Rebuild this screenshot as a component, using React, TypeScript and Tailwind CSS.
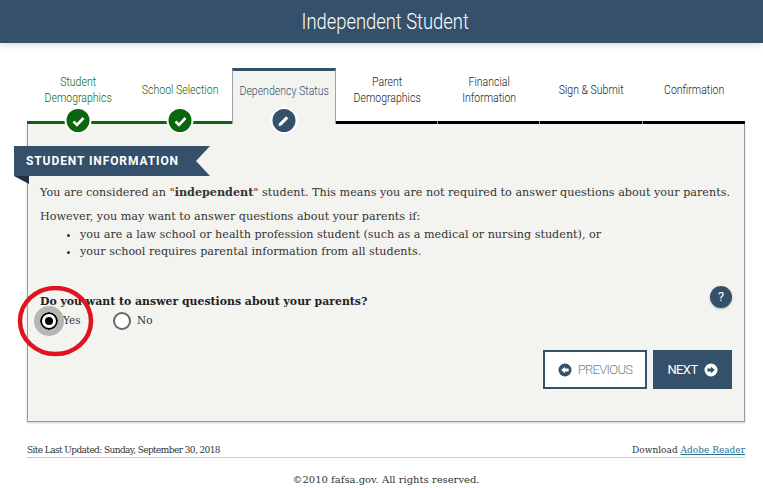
const serif = "font-['DejaVu_Serif','Liberation_Serif',serif]";

const steps = [
  { label: ["Student", "Demographics"], state: "done" },
  { label: ["School Selection"], state: "done" },
  { label: ["Dependency Status"], state: "current" },
  { label: ["Parent", "Demographics"], state: "todo", tick: true },
  { label: ["Financial", "Information"], state: "todo", tick: true },
  { label: ["Sign & Submit"], state: "todo", tick: true },
  { label: ["Confirmation"], state: "todo" },
];

function Check() {
  return (
    <svg width="14" height="14" viewBox="0 0 14 14">
      <path d="M2 7.5 L5.5 11 L12 4" fill="none" stroke="#fff" strokeWidth="2.6" />
    </svg>
  );
}

function Pencil() {
  return (
    <svg width="14" height="14" viewBox="0 0 14 14">
      <path d="M2 12 L2.6 9.2 L9.6 2.2 L11.8 4.4 L4.8 11.4 Z" fill="#fff" />
    </svg>
  );
}

function Arrow({ dir, fg, bg }: { dir: "left" | "right"; fg: string; bg: string }) {
  return (
    <svg width="14" height="14" viewBox="0 0 14 14">
      <circle cx="7" cy="7" r="6.5" fill={bg} />
      {dir === "left" ? (
        <path d="M3.2 7 L7 3.8 V5.6 H10.6 V8.4 H7 V10.2 Z" fill={fg} />
      ) : (
        <path d="M10.8 7 L7 3.8 V5.6 H3.4 V8.4 H7 V10.2 Z" fill={fg} />
      )}
    </svg>
  );
}

function Step({ label, state, tick }: { label: string[]; state: string; tick?: boolean }) {
  const current = state === "current";
  const done = state === "done";
  return (
    <div
      className={`relative flex-1 min-w-0 h-[56px] ${current ? "bg-[#f3f3f0] border-t-[3px] border-x border-[#34506a] border-x-[#9aa5ae]" : "border-b-[3px] " + (done ? "border-[#0b660f]" : "border-black")}`}
    >
      <div
        className={`flex flex-col items-center justify-center text-[13px] leading-[16px] font-['Roboto',sans-serif] font-light whitespace-nowrap scale-x-[0.81] ${current ? "h-[39px] text-[#34506a]" : "h-[44px] " + (done ? "text-[#0b660f]" : "text-[#222]")}`}
      >
        {label.map((l) => (
          <span key={l}>{l}</span>
        ))}
      </div>
      {state !== "todo" && (
        <div
          className={`absolute left-1/2 -translate-x-1/2 w-[27px] h-[27px] rounded-full border-2 border-white flex items-center justify-center ${current ? "top-[36px]" : "top-[39px]"} ${done ? "bg-[#0b660f]" : "bg-[#34506a]"}`}
        >
          {done ? <Check /> : <Pencil />}
        </div>
      )}
      {tick && <span className="absolute right-0 -bottom-[3px] w-px h-[3px] bg-[#999]" />}
    </div>
  );
}

export default function App() {
  return (
    <div className="w-[763px] h-[488px] bg-white overflow-hidden relative">
      <header className="h-[43px] bg-[#34506a] shadow-[0_2px_6px_rgba(0,0,0,0.15)] flex items-center justify-center pl-[7px] text-white text-[22px] font-['Roboto',sans-serif] font-light">
        <span className="inline-block scale-x-[0.835] whitespace-nowrap">Independent Student</span>
      </header>

      <div className="mx-[27px] mt-[25px] w-[718px]">
        <div className="flex relative z-10">
          {steps.map((s) => (
            <Step key={s.label[0]} label={s.label} state={s.state} tick={s.tick} />
          ))}
        </div>

        <main className="h-[298px] bg-[#f3f3f0] border-x border-b border-[#9a9a9a] shadow-[0_1px_2px_rgba(0,0,0,0.2)] relative pt-[22px]">
          <div className="relative -ml-[14px] w-[196px] h-[30px] bg-[#34506a] text-white font-bold text-[12px] tracking-[0.9px] font-['Roboto',sans-serif] flex items-center pl-[12px] [clip-path:polygon(0_0,100%_0,calc(100%-14px)_50%,100%_100%,0_100%)]">
            STUDENT INFORMATION
          </div>
          <div className="absolute -left-[14px] top-[52px] w-[15px] h-[8px] bg-[#1d3144] [clip-path:polygon(0_0,100%_0,100%_100%)]" />

          <div className={`${serif} text-[#333] text-[11.2px] pl-[12px] pr-[5px]`}>
            <p className="mt-[7px] leading-[18px] whitespace-nowrap">
              You are considered an "<b>independent</b>" student. This means you are not required to answer questions about your parents.
            </p>
            <p className="mt-[6px] leading-[18px]">However, you may want to answer questions about your parents if:</p>
            <ul className="list-disc pl-[40px] leading-[17px]">
              <li>you are a law school or health profession student (such as a medical or nursing student), or</li>
              <li>your school requires parental information from all students.</li>
            </ul>

            <div className="flex justify-between mt-[26px] pr-[5px]">
              <div>
                <div className="font-bold text-[10.9px] text-[#222] leading-[16px] mt-[8px]">Do you want to answer questions about your parents?</div>
                <div className="flex items-center text-[10.5px] h-[18px] mt-[1.5px]">
                  <span className="w-[18px] h-[18px] rounded-full border-[2.5px] border-black bg-white flex items-center justify-center outline-[6px] outline-[#b5b5b5]">
                    <span className="w-[8px] h-[8px] rounded-full bg-black" />
                  </span>
                  <span className="ml-[5px] w-[50px]">Yes</span>
                  <span className="w-[18px] h-[18px] rounded-full border-2 border-[#666] bg-white" />
                  <span className="ml-[6px]">No</span>
                </div>
              </div>
              <div className="w-[22px] h-[22px] mr-[2px] rounded-full bg-[#34506a] text-white font-['Roboto',sans-serif] text-[13px] flex items-center justify-center shadow-[0_1px_2px_rgba(0,0,0,0.3)]">?</div>
            </div>
          </div>

          <div className="absolute right-[12px] top-[226px] flex gap-[6px] font-['Roboto',sans-serif] text-[13px]">
            <button className="w-[104px] h-[39px] bg-white border-[2px] border-[#34506a] text-[#6f7f8d] flex items-center justify-center gap-[6px] font-light tracking-[-0.7px]">
              <Arrow dir="left" fg="#fff" bg="#34506a" />
              PREVIOUS
            </button>
            <button className="w-[79px] h-[39px] bg-[#34506a] text-white flex items-center justify-center gap-[6px] tracking-[-0.6px]">
              NEXT
              <Arrow dir="right" fg="#34506a" bg="#fff" />
            </button>
          </div>
        </main>

        <div className={`${serif} mt-[21px] flex justify-between items-end text-[9px] text-[#333] border-b border-[#ccc] h-[15px]`}>
          <span className="tracking-[-0.6px]">Site Last Updated: Sunday, September 30, 2018</span>
          <span>
            Download <a className="text-[#1f6f8f] underline">Adobe Reader</a>
          </span>
        </div>
        <div className={`${serif} text-center text-[10px] text-[#333] mt-[14px]`}>©2010 fafsa.gov. All rights reserved.</div>
      </div>

      <svg className="absolute left-[17px] top-[286px] pointer-events-none z-20" width="78" height="72" viewBox="0 0 78 72">
        <ellipse cx="38.5" cy="35" rx="35.5" ry="33" fill="none" stroke="#e0141f" strokeWidth="4.5" />
      </svg>
    </div>
  );
}
